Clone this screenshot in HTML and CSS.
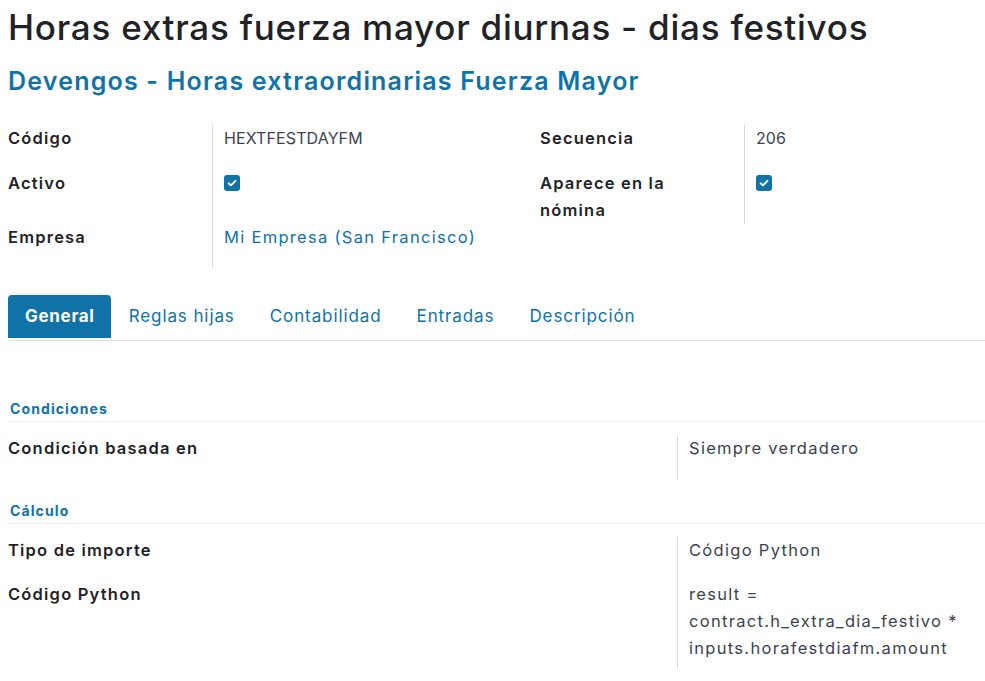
FILE: index.html
```html
<!DOCTYPE html>
<html lang="es">
<head>
<meta charset="utf-8">
<title>Horas extras fuerza mayor diurnas - dias festivos</title>
<link rel="stylesheet" href="styles.css">
</head>
<body>
<div class="sheet">
  <h1 class="title">Horas extras fuerza mayor diurnas - dias festivos</h1>
  <h2 class="subtitle">Devengos - Horas extraordinarias Fuerza Mayor</h2>

  <div class="top-groups">
    <div class="group group-left">
      <div class="lbl r1">Código</div>
      <div class="val r1 code">HEXTFESTDAYFM</div>
      <div class="lbl r2">Activo</div>
      <div class="val r2"><span class="check"><svg viewBox="0 0 16 16" width="16" height="16"><path d="M4.6 8.3 L7 10.4 L11.4 5.8" fill="none" stroke="#fff" stroke-width="1.9" stroke-linecap="round" stroke-linejoin="round"/></svg></span></div>
      <div class="lbl r3">Empresa</div>
      <div class="val r3 link">Mi Empresa (San Francisco)</div>
    </div>
    <div class="group group-right">
      <div class="lbl r1">Secuencia</div>
      <div class="val r1 code">206</div>
      <div class="lbl r2b">Aparece en la<br>nómina</div>
      <div class="val r2b"><span class="check"><svg viewBox="0 0 16 16" width="16" height="16"><path d="M4.6 8.3 L7 10.4 L11.4 5.8" fill="none" stroke="#fff" stroke-width="1.9" stroke-linecap="round" stroke-linejoin="round"/></svg></span></div>
    </div>
  </div>

  <nav class="tabs">
    <span class="tab active">General</span>
    <span class="tab">Reglas hijas</span>
    <span class="tab">Contabilidad</span>
    <span class="tab">Entradas</span>
    <span class="tab">Descripción</span>
  </nav>

  <section class="tab-body">
    <div class="sep-head">Condiciones</div>
    <div class="rows">
      <div class="lbl gap">Condición basada en</div>
      <div class="val gap">Siempre verdadero</div>
    </div>

    <div class="sep-head second">Cálculo</div>
    <div class="rows">
      <div class="lbl gap">Tipo de importe</div>
      <div class="val gap">Código Python</div>
      <div class="lbl last">Código Python</div>
      <div class="val last">result =<br>contract.h_extra_dia_festivo *<br>inputs.horafestdiafm.amount</div>
    </div>
  </section>
</div>
</body>
</html>
```

FILE: styles.css
```css
html, body {
  margin: 0;
  padding: 0;
  background: #ffffff;
}

body {
  font-family: "Inter", "Noto Sans", sans-serif;
  color: #212529;
  overflow: hidden;
}

.sheet {
  width: 1100px;
  padding: 0 8px;
}

.title {
  margin: 0;
  padding-top: 5px;
  font-size: 35px;
  line-height: 44px;
  font-weight: 500;
  color: #1f2328;
  letter-spacing: 0.75px;
}

.subtitle {
  margin: 16px 0 0;
  font-size: 25px;
  line-height: 32px;
  font-weight: 600;
  color: #0f73a8;
  letter-spacing: 1.2px;
}

.top-groups {
  display: grid;
  grid-template-columns: 532px 532px;
  margin-top: 28px;
  align-items: start;
}

.group {
  display: grid;
  grid-template-columns: 204px 1fr;
}

.lbl {
  font-size: 16.5px;
  line-height: 27px;
  font-weight: 600;
  color: #1f2328;
  letter-spacing: 1.2px;
}

.val {
  font-size: 16.5px;
  line-height: 27px;
  color: #3c4350;
  border-left: 1px solid #d8dadd;
  padding-left: 11px;
  letter-spacing: 1.3px;
}

.val.code {
  font-size: 16px;
  letter-spacing: 0.1px;
}

.link {
  color: #0f73a8;
}

.r1 { padding-bottom: 18px; }
.r2 { padding-bottom: 27px; }
.r2b { padding-bottom: 0; }
.r3 { padding-bottom: 17px; }

.check {
  display: inline-flex;
  width: 16px;
  height: 16px;
  margin-top: 5px;
  border-radius: 3px;
  background: #0f73a8;
  vertical-align: top;
}

.tabs {
  display: flex;
  margin-top: 27px;
  border-bottom: 1px solid #dee2e6;
  width: 977px;
}

.tab {
  padding: 0 17px 0 18px;
  height: 43px;
  line-height: 43px;
  font-size: 17px;
  color: #0f73a8;
  margin-bottom: -1px;
  border-bottom: 3px solid transparent;
  letter-spacing: 0.9px;
}

.tab.active {
  padding: 0 16px 0 17px;
  background: #0f73a8;
  color: #ffffff;
  font-weight: 700;
  letter-spacing: 0.7px;
  border-radius: 4px 4px 0 0;
  border-bottom: 2px solid #ffffff;
  background-clip: padding-box;
}

.tab-body {
  padding-top: 59px;
}

.sep-head {
  font-size: 14px;
  line-height: 18px;
  font-weight: 700;
  color: #0f73a8;
  letter-spacing: 1.1px;
  padding: 0 0 3px 2px;
  border-bottom: 1px solid #eceef0;
  margin-bottom: 13px;
  width: 975px;
}

.sep-head.second {
  margin-top: 23px;
}

.rows {
  display: grid;
  grid-template-columns: 669px 1fr;
}

.gap { padding-bottom: 17px; }
.last { padding-bottom: 7px; }
```
